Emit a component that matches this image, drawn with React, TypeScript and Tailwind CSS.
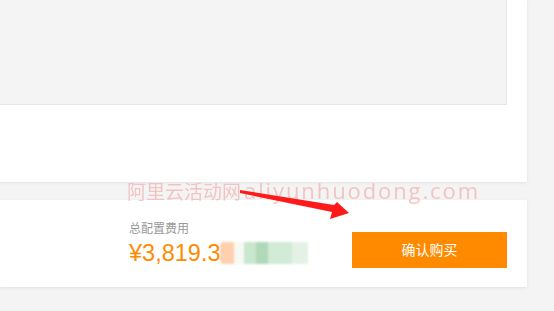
export default function App() {
  return (
    <div
      className="relative w-[554px] h-[311px] overflow-hidden bg-[#f4f4f4]"
      style={{ fontFamily: '"Liberation Sans", "Noto Sans CJK SC", sans-serif' }}
    >
      {/* top card */}
      <div className="w-[527px] h-[182px] bg-white shadow-[0_1px_3px_rgba(0,0,0,0.08)]">
        <div className="w-[507px] h-[105px] bg-[#f4f4f4] border-r border-b border-[#e6e6e6]" />
      </div>

      {/* summary card */}
      <div className="mt-[18px] w-[527px] h-[87px] bg-white shadow-[0_1px_3px_rgba(0,0,0,0.08)] flex items-start">
        <div className="ml-[129px] mt-[22px] flex flex-col">
          <span className="text-[12px] leading-[14px] text-[#999]">总配置费用</span>
          <div className="flex items-center mt-[4px]">
            <span className="text-[23.5px] leading-[26px] text-[#ff8a00]">¥3,819.3</span>
            <div className="flex h-[22px] blur-[1px]">
              <div className="w-[14px] bg-[#ffd0ad] rounded-l" />
              <div className="w-[10px] bg-[#f6f9f4]" />
              <div className="w-[12px] bg-[#c9e6cf]" />
              <div className="w-[12px] bg-[#afd9b8]" />
              <div className="w-[24px] bg-[#d2ebd7]" />
              <div className="w-[16px] bg-[#e4f2e6]" />
            </div>
          </div>
        </div>
        <button className="ml-auto mr-[20px] mt-[32px] w-[155px] h-[36px] bg-[#ff8a00] text-white text-[14px]">
          确认购买
        </button>
      </div>

      {/* watermark */}
      <div className="absolute left-[127px] top-[177px] flex items-baseline whitespace-nowrap text-[#f2b8b8] opacity-80">
        <span
          className="text-[19px] leading-[26px]"
          style={{ fontFamily: '"Noto Sans CJK SC", sans-serif' }}
        >
          阿里云活动网
        </span>
        <span
          className="ml-[3px] text-[22px] leading-[26px] tracking-[1.9px]"
          style={{ fontFamily: '"Open Sans", sans-serif' }}
        >
          aliyunhuodong.com
        </span>
      </div>

      {/* arrow */}
      <svg className="absolute left-0 top-0" width="554" height="311">
        <polygon
          points="240,190 334,205 337,202 349,213 330,219 332,212 240,193"
          fill="#ff1a1a"
        />
      </svg>
    </div>
  );
}
